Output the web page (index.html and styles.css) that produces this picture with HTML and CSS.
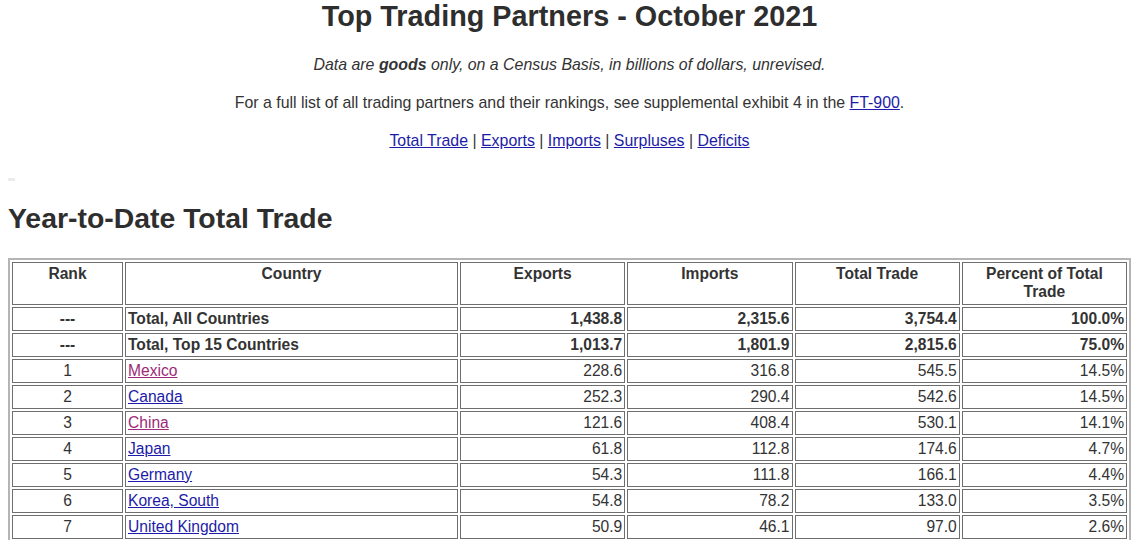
FILE: index.html
```html
<!DOCTYPE html>
<html lang="en">
<head>
<meta charset="utf-8">
<title>Top Trading Partners - October 2021</title>
<link rel="stylesheet" href="styles.css">
</head>
<body>
<header class="intro">
  <h1 class="title">Top Trading Partners - October 2021</h1>
  <p class="note"><em>Data are <strong>goods</strong> only, on a Census Basis, in billions of dollars, unrevised.</em></p>
  <p class="note">For a full list of all trading partners and their rankings, see supplemental exhibit 4 in the <a href="#">FT-900</a>.</p>
  <p class="note"><a href="#">Total Trade</a> | <a href="#">Exports</a> | <a href="#">Imports</a> | <a href="#">Surpluses</a> | <a href="#">Deficits</a></p>
</header>
<div class="rule"></div>
<h2 class="section-title">Year-to-Date Total Trade</h2>
<table class="trade">
  <colgroup>
    <col class="c-rank"><col class="c-country"><col class="c-num"><col class="c-num"><col class="c-num"><col class="c-num">
  </colgroup>
  <thead>
    <tr><th>Rank</th><th>Country</th><th>Exports</th><th>Imports</th><th>Total Trade</th><th>Percent of Total Trade</th></tr>
  </thead>
  <tbody>
    <tr class="total"><td class="rank">---</td><td>Total, All Countries</td><td class="num">1,438.8</td><td class="num">2,315.6</td><td class="num">3,754.4</td><td class="num">100.0%</td></tr>
    <tr class="total"><td class="rank">---</td><td>Total, Top 15 Countries</td><td class="num">1,013.7</td><td class="num">1,801.9</td><td class="num">2,815.6</td><td class="num">75.0%</td></tr>
    <tr><td class="rank">1</td><td><a class="visited" href="#">Mexico</a></td><td class="num">228.6</td><td class="num">316.8</td><td class="num">545.5</td><td class="num">14.5%</td></tr>
    <tr><td class="rank">2</td><td><a href="#">Canada</a></td><td class="num">252.3</td><td class="num">290.4</td><td class="num">542.6</td><td class="num">14.5%</td></tr>
    <tr><td class="rank">3</td><td><a class="visited" href="#">China</a></td><td class="num">121.6</td><td class="num">408.4</td><td class="num">530.1</td><td class="num">14.1%</td></tr>
    <tr><td class="rank">4</td><td><a href="#">Japan</a></td><td class="num">61.8</td><td class="num">112.8</td><td class="num">174.6</td><td class="num">4.7%</td></tr>
    <tr><td class="rank">5</td><td><a href="#">Germany</a></td><td class="num">54.3</td><td class="num">111.8</td><td class="num">166.1</td><td class="num">4.4%</td></tr>
    <tr><td class="rank">6</td><td><a href="#">Korea, South</a></td><td class="num">54.8</td><td class="num">78.2</td><td class="num">133.0</td><td class="num">3.5%</td></tr>
    <tr><td class="rank">7</td><td><a href="#">United Kingdom</a></td><td class="num">50.9</td><td class="num">46.1</td><td class="num">97.0</td><td class="num">2.6%</td></tr>
  </tbody>
</table>
</body>
</html>
```

FILE: styles.css
```css
html { background: #fff; }
body {
  margin: 0 8px 0;
  font-family: "Liberation Sans", Arial, Helvetica, sans-serif;
  font-size: 15.6px;
  line-height: 18px;
  color: #333;
}
a { color: #1c1ca8; text-decoration: underline; }
a.visited { color: #9b2a78; }
.intro { text-align: center; }
.title {
  margin: 0;
  font-size: 28.8px;
  line-height: 32px;
  font-weight: bold;
  color: #2e2e2e;
}
.note { margin: 24px 0 0; font-size: 15.9px; }
.note + .note { margin-top: 20px; }
.rule {
  width: 7px;
  height: 3px;
  margin-top: 28px;
  background: #ececec;
}
.section-title {
  margin: 21px 0 0;
  font-size: 28.4px;
  line-height: 32px;
  font-weight: bold;
  color: #2e2e2e;
}
.trade {
  margin-top: 24px;
  width: 100%;
  table-layout: fixed;
  border: 2px solid #b4b4b4;
  border-spacing: 2px;
}
.c-rank { width: 111px; }
.c-country { width: 333px; }
.trade th, .trade td {
  border: 1px solid #6e6e6e;
  padding: 2px;
  line-height: 18px;
}
.trade th {
  vertical-align: top;
  text-align: center;
  font-weight: bold;
  padding-bottom: 3px;
}
.trade td { text-align: left; }
.trade td.rank { text-align: center; }
.trade td.num { text-align: right; }
.trade tr.total td { font-weight: bold; }
```
